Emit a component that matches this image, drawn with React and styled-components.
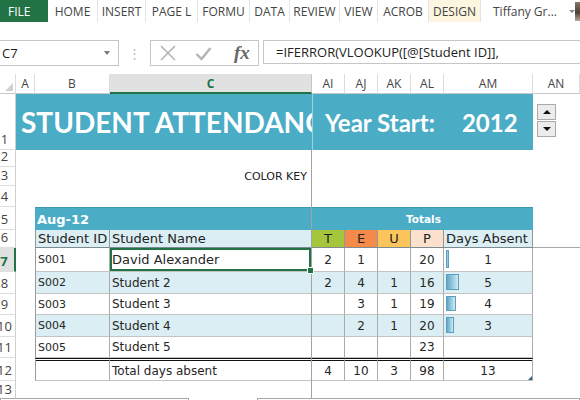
import React from 'react';
import styled, { createGlobalStyle } from 'styled-components';

const GlobalStyle = createGlobalStyle`
  html, body {
    margin: 0;
    padding: 0;
    background: #fff;
  }
  body {
    width: 580px;
    height: 400px;
    overflow: hidden;
    font-family: "Open Sans", "Liberation Sans", sans-serif;
  }
`;

const COLS = '16px 19px 75px 202px 33px 33px 33px 33px 89px 1fr';
const CELL_FONT = '"DejaVu Sans", "Liberation Sans", sans-serif';
const TEAL = '#4bacc6';
const SHADE = '#daeef3';
const GREEN = '#217346';

const Window = styled.div`
  position: relative;
  width: 580px;
  height: 400px;
  display: flex;
  flex-direction: column;
  overflow: hidden;
`;

/* ---------- ribbon ---------- */

const Ribbon = styled.div`
  display: flex;
  height: 22px;
  margin-bottom: 18px;
`;

const FileTab = styled.div`
  width: 48px;
  box-sizing: border-box;
  padding-left: 8px;
  display: flex;
  align-items: center;
  background: ${GREEN};
  color: #fff;
  font-size: 12px;
`;

const Tab = styled.div`
  width: ${p => p.$w}px;
  box-sizing: border-box;
  display: flex;
  align-items: center;
  justify-content: center;
  font-size: 12px;
  color: #444;
  border-right: 1px solid #e4e4e4;
  background: ${p => (p.$active ? '#fcf5df' : 'transparent')};
`;

const User = styled.div`
  flex: 1;
  min-width: 0;
  display: flex;
  align-items: center;
  padding-left: 12px;
  font-size: 12px;
  color: #444;
  white-space: nowrap;
  overflow: hidden;
`;

const UserCaret = styled.span`
  flex: none;
  margin-left: 12px;
  width: 0;
  height: 0;
  border-left: 3px solid transparent;
  border-right: 3px solid transparent;
  border-top: 3px solid #888;
`;

const Avatar = styled.div`
  flex: none;
  margin-left: auto;
  width: 8px;
  height: 19px;
  background: linear-gradient(180deg, #8a7868, #4d3f36 55%, #b7a796);
`;

/* ---------- formula bar ---------- */

const FormulaBar = styled.div`
  display: flex;
  align-items: flex-start;
  height: 26px;
  margin-bottom: 8px;
`;

const NameBox = styled.div`
  width: 119px;
  height: 26px;
  box-sizing: border-box;
  border: 1px solid #c6c6c6;
  border-left: none;
  display: flex;
  align-items: center;
  padding: 0 8px 0 2px;
  font-size: 13px;
  color: #222;
`;

const Caret = styled.span`
  margin-left: auto;
  width: 0;
  height: 0;
  border-left: 3.5px solid transparent;
  border-right: 3.5px solid transparent;
  border-top: 4px solid #777;
`;

const Grip = styled.div`
  width: 31px;
  height: 26px;
  display: flex;
  align-items: center;
  justify-content: center;
  color: #bdbdbd;
  font-size: 13px;
`;

const FxBox = styled.div`
  width: 109px;
  height: 26px;
  box-sizing: border-box;
  border: 1px solid #c6c6c6;
  display: flex;
  align-items: center;
  padding-left: 8px;
  gap: 18px;
`;

const Fx = styled.span`
  font-family: "Liberation Serif", "DejaVu Serif", serif;
  font-style: italic;
  font-weight: 700;
  font-size: 19px;
  color: #666;
  margin-left: 4px;
`;

const FormulaInput = styled.div`
  flex: 1;
  margin-left: 4px;
  height: 24px;
  box-sizing: border-box;
  border: 1px solid #c6c6c6;
  border-right: none;
  display: flex;
  align-items: center;
  padding-left: 12px;
  font-size: 13px;
  color: #222;
  white-space: nowrap;
`;

/* ---------- sheet grid ---------- */

const Sheet = styled.div`
  display: flex;
  flex-direction: column;
  font-family: ${CELL_FONT};
`;

const SheetRow = styled.div`
  display: grid;
  grid-template-columns: ${COLS};
  height: ${p => p.$h}px;
`;

const Corner = styled.div`
  position: relative;
  box-sizing: border-box;
  border-right: 1px solid #dcdcdc;
  border-bottom: 1px solid #c8c8c8;
  &::after {
    content: '';
    position: absolute;
    right: 2px;
    bottom: 2px;
    border-left: 8px solid transparent;
    border-bottom: 8px solid #d0d0d0;
  }
`;

const ColHead = styled.div`
  box-sizing: border-box;
  display: flex;
  align-items: center;
  justify-content: center;
  font-family: "Open Sans", "Liberation Sans", sans-serif;
  font-size: 12px;
  color: ${p => (p.$active ? GREEN : '#444')};
  font-weight: ${p => (p.$active ? 700 : 400)};
  background: ${p => (p.$active ? '#e1e1e1' : '#fff')};
  border-right: 1px solid ${p => (p.$active ? '#c4c4c4' : '#dcdcdc')};
  border-bottom: ${p => (p.$active ? `2px solid ${GREEN}` : '1px solid #c8c8c8')};
`;

const RowHead = styled.div`
  box-sizing: border-box;
  display: flex;
  align-items: flex-end;
  justify-content: center;
  padding: 0 6px 2px 0;
  overflow: hidden;
  font-family: "Open Sans", "Liberation Sans", sans-serif;
  font-size: 13px;
  line-height: 15px;
  color: ${p => (p.$active ? GREEN : '#444')};
  font-weight: ${p => (p.$active ? 700 : 400)};
  background: ${p => (p.$active ? '#e1e1e1' : '#fff')};
  border-bottom: 1px solid #dedede;
  border-right: ${p => (p.$active ? `2px solid ${GREEN}` : '1px solid #cfcfcf')};
`;

const Blank = styled.div`
  box-sizing: border-box;
  border-bottom: ${p => (p.$freeze ? '1px solid #a8a8a8' : 'none')};
`;

const TitleBanner = styled.div`
  grid-column: span 3;
  background: ${TEAL};
  color: #fff;
  display: flex;
  align-items: center;
  padding-left: 5px;
  overflow: hidden;
  white-space: nowrap;
  font-family: Lato, "Liberation Sans", sans-serif;
  font-weight: 700;
  font-size: 28px;
`;

const YearBanner = styled.div`
  grid-column: span 5;
  background: ${TEAL};
  border-left: 1px solid #9fd0dd;
  color: #fff;
  display: flex;
  align-items: center;
  padding-left: 12px;
  white-space: nowrap;
  font-family: Lato, "Liberation Sans", sans-serif;
  font-weight: 700;
  font-size: 24px;
`;

const Year = styled.span`
  margin-left: 27px;
`;

const Spinner = styled.div`
  margin: 10px 0 0 4px;
  width: 19px;
  display: flex;
  flex-direction: column;
  gap: 1px;
`;

const SpinButton = styled.div`
  height: 16px;
  box-sizing: border-box;
  border: 1px solid #a9a9a9;
  background: #ececec;
  display: flex;
  align-items: center;
  justify-content: center;
  &::after {
    content: '';
    border-left: 4px solid transparent;
    border-right: 4px solid transparent;
    ${p => (p.$up ? 'border-bottom: 4px solid #111;' : 'border-top: 4px solid #111;')}
  }
`;

const KeyLabel = styled.div`
  grid-column: 4;
  display: flex;
  align-items: center;
  justify-content: flex-end;
  padding-right: 5px;
  font-size: 11px;
  color: #222;
`;

const BandHead = styled.div`
  grid-column: span ${p => p.$span};
  background: ${TEAL};
  color: #fff;
  font-weight: 700;
  font-size: ${p => p.$size}px;
  display: flex;
  align-items: center;
  justify-content: ${p => (p.$center ? 'center' : 'flex-start')};
  padding-left: 2px;
  border-top: 1px solid #3f98b0;
`;

const HeadCell = styled.div`
  box-sizing: border-box;
  display: flex;
  align-items: center;
  justify-content: ${p => (p.$center ? 'center' : 'flex-start')};
  padding: 0 2px;
  white-space: nowrap;
  overflow: hidden;
  font-size: 13px;
  color: #222;
  background: ${p => p.$bg || SHADE};
  border-right: 1px solid #8f9a9d;
  border-bottom: 1px solid #7d8b8f;
  border-left: ${p => (p.$first ? '1px solid #8f9a9d' : 'none')};
`;

const Td = styled.div`
  position: relative;
  box-sizing: border-box;
  display: flex;
  align-items: center;
  justify-content: ${p => (p.$center ? 'center' : 'flex-start')};
  padding: 0 2px;
  white-space: nowrap;
  font-size: ${p => p.$size || 12}px;
  color: #262626;
  background: ${p => (p.$shade ? SHADE : '#fff')};
  border-right: 1px solid #ababab;
  border-bottom: 1px solid #c4c4c4;
  border-left: ${p => (p.$first ? '1px solid #9a9a9a' : 'none')};
  border-top: ${p => (p.$total ? '3px double #111' : 'none')};
`;

const SelectedTd = styled(Td)`
  box-shadow: inset 0 0 0 2px ${GREEN};
  &::after {
    content: '';
    position: absolute;
    right: -3px;
    bottom: -3px;
    width: 5px;
    height: 5px;
    background: ${GREEN};
    border: 1px solid #fff;
    z-index: 2;
  }
`;

const CornerMark = styled.span`
  position: absolute;
  right: 0;
  bottom: 0;
  border-left: 4px solid transparent;
  border-bottom: 4px solid #2f5f80;
`;

const Bar = styled.span`
  position: absolute;
  left: 2px;
  top: 2px;
  bottom: 3px;
  box-sizing: border-box;
  border: 1px solid #5a9fbf;
  background: linear-gradient(90deg, #5ea8c7 0%, #a6d2e3 65%, #d4ebf3 100%);
`;

const Value = styled.span`
  position: relative;
`;

const FreezeLine = styled.div`
  position: absolute;
  left: 311px;
  top: 150px;
  width: 1px;
  height: 248px;
  background: #a3a3a3;
`;

const ShapeLayer = styled.div`
  position: absolute;
  left: 0;
  right: 0;
  top: 398px;
  display: flex;
`;

const ShapeBox = styled.div`
  height: 10px;
  box-sizing: border-box;
  background: #fff;
  border: 1px solid #a8a8a8;
  width: ${p => (p.$w ? `${p.$w}px` : 'auto')};
  flex: ${p => (p.$w ? 'none' : 1)};
  margin-left: ${p => p.$gap || 0}px;
`;

const tabs = [
  { label: 'HOME', w: 50 },
  { label: 'INSERT', w: 48 },
  { label: 'PAGE L', w: 52 },
  { label: 'FORMU', w: 52 },
  { label: 'DATA', w: 40 },
  { label: 'REVIEW', w: 50 },
  { label: 'VIEW', w: 38 },
  { label: 'ACROB', w: 51 },
  { label: 'DESIGN', w: 52, active: true },
];

const columns = [
  { label: 'A' }, { label: 'B' }, { label: 'C', active: true },
  { label: 'AI' }, { label: 'AJ' }, { label: 'AK' }, { label: 'AL' },
  { label: 'AM' }, { label: 'AN' },
];

const codes = [
  { key: 't', label: 'T', bg: '#a5c53d' },
  { key: 'e', label: 'E', bg: '#f68a4b' },
  { key: 'u', label: 'U', bg: '#fcc55b' },
  { key: 'p', label: 'P', bg: '#fbe1cd' },
];

const students = [
  { id: 'S001', name: 'David Alexander', t: 2, e: 1, u: null, p: 20, abs: 1, h: 24 },
  { id: 'S002', name: 'Student 2', t: 2, e: 4, u: 1, p: 16, abs: 5, h: 22 },
  { id: 'S003', name: 'Student 3', t: null, e: 3, u: 1, p: 19, abs: 4, h: 21 },
  { id: 'S004', name: 'Student 4', t: null, e: 2, u: 1, p: 20, abs: 3, h: 22 },
  { id: 'S005', name: 'Student 5', t: null, e: null, u: null, p: 23, abs: null, h: 21 },
];

const sum = key => students.reduce((acc, s) => acc + (s[key] || 0), 0);

const CancelIcon = () => (
  <svg width="18" height="18" viewBox="0 0 18 18">
    <path d="M2 2 L16 16 M16 2 L2 16" stroke="#b4b4b4" strokeWidth="1.6" fill="none" />
  </svg>
);

const EnterIcon = () => (
  <svg width="17" height="15" viewBox="0 0 17 15">
    <path d="M1.5 8 L6.5 13 L15.5 2" stroke="#b4b4b4" strokeWidth="2.4" fill="none" />
  </svg>
);

const App = () => {
  return (
    <Window>
      <GlobalStyle />

      <Ribbon>
        <FileTab>FILE</FileTab>
        {tabs.map(t => (
          <Tab key={t.label} $w={t.w} $active={t.active}>{t.label}</Tab>
        ))}
        <User>
          Tiffany Gr...
          <UserCaret />
          <Avatar />
        </User>
      </Ribbon>

      <FormulaBar>
        <NameBox>
          C7
          <Caret />
        </NameBox>
        <Grip>⋮</Grip>
        <FxBox>
          <CancelIcon />
          <EnterIcon />
          <Fx>fx</Fx>
        </FxBox>
        <FormulaInput>=IFERROR(VLOOKUP([@[Student ID]],</FormulaInput>
      </FormulaBar>

      <Sheet>
        <SheetRow $h={20}>
          <Corner />
          {columns.map(c => (
            <ColHead key={c.label} $active={c.active}>{c.label}</ColHead>
          ))}
        </SheetRow>

        <SheetRow $h={56}>
          <RowHead>1</RowHead>
          <TitleBanner>STUDENT ATTENDANCE</TitleBanner>
          <YearBanner>
            Year Start:<Year>2012</Year>
          </YearBanner>
          <Spinner>
            <SpinButton $up />
            <SpinButton />
          </Spinner>
        </SheetRow>

        <SheetRow $h={17}>
          <RowHead>2</RowHead>
        </SheetRow>

        <SheetRow $h={19}>
          <RowHead>3</RowHead>
          <KeyLabel>COLOR KEY</KeyLabel>
        </SheetRow>

        <SheetRow $h={21}>
          <RowHead>4</RowHead>
        </SheetRow>

        <SheetRow $h={23}>
          <RowHead>5</RowHead>
          <Blank />
          <BandHead $span={2} $size={13}>Aug-12</BandHead>
          <BandHead $span={5} $size={10.5} $center>Totals</BandHead>
          <Blank />
        </SheetRow>

        <SheetRow $h={18}>
          <RowHead>6</RowHead>
          <Blank />
          <HeadCell $first>Student ID</HeadCell>
          <HeadCell>Student Name</HeadCell>
          {codes.map(c => (
            <HeadCell key={c.key} $bg={c.bg} $center>{c.label}</HeadCell>
          ))}
          <HeadCell>Days Absent</HeadCell>
          <Blank $freeze />
        </SheetRow>

        {students.map((s, i) => {
          const shade = i % 2 === 1;
          const NameCell = i === 0 ? SelectedTd : Td;
          return (
            <SheetRow key={s.id} $h={s.h}>
              <RowHead $active={i === 0}>{7 + i}</RowHead>
              <Blank />
              <Td $first $shade={shade} $size={11}>{s.id}</Td>
              <NameCell $shade={shade} $size={i === 0 ? 13 : 12}>{s.name}</NameCell>
              {codes.map(c => (
                <Td key={c.key} $shade={shade} $center>{s[c.key]}</Td>
              ))}
              <Td $shade={shade} $center>
                {s.abs && <Bar style={{ width: Math.round(s.abs * 2.6) }} />}
                <Value>{s.abs}</Value>
              </Td>
              <Blank />
            </SheetRow>
          );
        })}

        <SheetRow $h={23}>
          <RowHead>12</RowHead>
          <Blank />
          <Td $first $total />
          <Td $total>Total days absent</Td>
          {codes.map(c => (
            <Td key={c.key} $total $center>{sum(c.key)}</Td>
          ))}
          <Td $total $center>
            {sum('abs')}
            <CornerMark />
          </Td>
          <Blank />
        </SheetRow>

        <SheetRow $h={19}>
          <RowHead>13</RowHead>
        </SheetRow>
      </Sheet>

      <FreezeLine />
      <ShapeLayer>
        <ShapeBox $w={189} />
        <ShapeBox $gap={68} />
      </ShapeLayer>
    </Window>
  );
};

export default App;
